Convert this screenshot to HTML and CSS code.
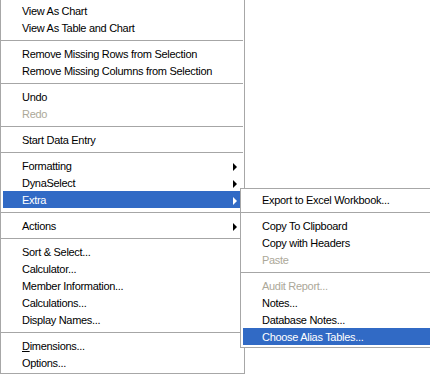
FILE: index.html
```html
<!DOCTYPE html>
<html>
<head>
<meta charset="utf-8">
<link rel="stylesheet" href="styles.css">
</head>
<body>
<div class="stage">
  <div class="menu main">
    <div class="item">View As Chart</div>
    <div class="item">View As Table and Chart</div>
    <div class="sep"></div>
    <div class="item">Remove Missing Rows from Selection</div>
    <div class="item">Remove Missing Columns from Selection</div>
    <div class="sep"></div>
    <div class="item">Undo</div>
    <div class="item disabled">Redo</div>
    <div class="sep"></div>
    <div class="item">Start Data Entry</div>
    <div class="sep"></div>
    <div class="item sub"><span class="label">Formatting</span><span class="arrow"></span></div>
    <div class="item sub"><span class="label">DynaSelect</span><span class="arrow"></span></div>
    <div class="item sub active"><span class="label">Extra</span><span class="arrow"></span></div>
    <div class="sep"></div>
    <div class="item sub"><span class="label">Actions</span><span class="arrow"></span></div>
    <div class="sep"></div>
    <div class="item">Sort &amp; Select...</div>
    <div class="item">Calculator...</div>
    <div class="item">Member Information...</div>
    <div class="item">Calculations...</div>
    <div class="item">Display Names...</div>
    <div class="sep"></div>
    <div class="item"><span class="mn">D</span>imensions...</div>
    <div class="item">Options...</div>
  </div>
  <div class="menu submenu">
    <div class="item">Export to Excel Workbook...</div>
    <div class="sep"></div>
    <div class="item">Copy To Clipboard</div>
    <div class="item">Copy with Headers</div>
    <div class="item disabled">Paste</div>
    <div class="sep"></div>
    <div class="item disabled">Audit Report...</div>
    <div class="item">Notes...</div>
    <div class="item">Database Notes...</div>
    <div class="item active">Choose Alias Tables...</div>
  </div>
</div>
</body>
</html>
```
FILE: styles.css
```css
html, body {
  margin: 0;
  padding: 0;
  background: #ffffff;
}
body {
  width: 430px;
  height: 374px;
  overflow: hidden;
  font-family: Tahoma, "Liberation Sans", Arial, sans-serif;
  font-size: 11px;
  letter-spacing: -0.3px;
  color: #000000;
}
.stage {
  position: relative;
  width: 430px;
  height: 374px;
}
.menu {
  box-sizing: border-box;
  background: #ffffff;
  border: 1px solid #a7a7a7;
  padding: 2px;
}
.main {
  width: 245px;
  margin-top: -1px;
}
.submenu {
  position: absolute;
  left: 240px;
  top: 189px;
  width: 196px;
}
.item {
  box-sizing: border-box;
  height: 17px;
  line-height: 15px;
  padding-top: 2px;
  padding-left: 19px;
  padding-right: 5px;
  white-space: nowrap;
  display: flex;
  align-items: center;
}
.item.disabled {
  color: #aca899;
}
.item.active {
  background: #316ac5;
  color: #ffffff;
}
.label {
  flex: 1;
}
.arrow {
  width: 0;
  height: 0;
  border-left: 4px solid #000000;
  border-top: 4px solid transparent;
  border-bottom: 4px solid transparent;
}
.item.active .arrow {
  border-left-color: #ffffff;
}
.sep {
  height: 1px;
  margin: 4px -1px 4px -2px;
  background: #a6a6a6;
}
.mn {
  text-decoration: underline;
}
```
